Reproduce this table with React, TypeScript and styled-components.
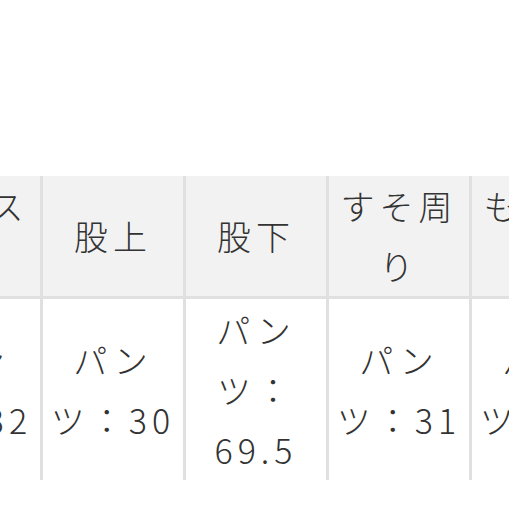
import styled, { createGlobalStyle } from "styled-components"

const GlobalStyle = createGlobalStyle`
  html, body {
    margin: 0;
    padding: 0;
    background: #fff;
  }
  body {
    width: 509px;
    height: 509px;
    overflow: hidden;
    font-family: "Noto Sans CJK JP", "Noto Sans", sans-serif;
  }
`;

const Page = styled.div`
  width: 509px;
  height: 509px;
  overflow: hidden;
  padding-top: 176px;
  box-sizing: border-box;
`;

const SizeTable = styled.table`
  width: 715px;
  margin-left: -103px;
  border-collapse: separate;
  border-spacing: 0;
  table-layout: fixed;
  color: #333;
  font-size: 34px;
  font-weight: 300;
  letter-spacing: 5px;
  line-height: 60px;
`;

const HeadCell = styled.th`
  width: 143px;
  box-sizing: border-box;
  padding: 0 2px;
  font-weight: 300;
  text-align: center;
  vertical-align: middle;
  background: #f2f2f2;
  border-left: 3px solid #e0e0e0;
  border-bottom: 3px solid #e0e0e0;
  height: 123px;
`;

const BodyCell = styled.td`
  width: 143px;
  box-sizing: border-box;
  padding: 0 2px;
  text-align: center;
  vertical-align: middle;
  background: #fff;
  border-left: 3px solid #e0e0e0;
  height: 181px;
`;

type Column = {
  label: string
  value: string
}

const columns: Column[] = [
  { label: "ウエスト", value: "パンツ：32" },
  { label: "股上", value: "パンツ：30" },
  { label: "股下", value: "パンツ：69.5" },
  { label: "すそ周り", value: "パンツ：31" },
  { label: "もも周り", value: "パンツ：33" },
];

export default function App() {
  return (
    <>
      <GlobalStyle />
      <Page>
        <SizeTable>
          <thead>
            <tr>
              {columns.map((c) => (
                <HeadCell key={c.label}>{c.label}</HeadCell>
              ))}
            </tr>
          </thead>
          <tbody>
            <tr>
              {columns.map((c) => (
                <BodyCell key={c.label}>{c.value}</BodyCell>
              ))}
            </tr>
          </tbody>
        </SizeTable>
      </Page>
    </>
  )
}
